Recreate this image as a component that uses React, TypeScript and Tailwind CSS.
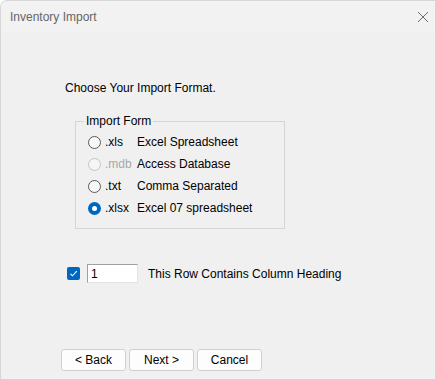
import React from "react";

const radios = [
    { ext: ".xls", label: "Excel Spreadsheet", checked: false, disabled: false },
    { ext: ".mdb", label: "Access Database", checked: false, disabled: true },
    { ext: ".txt", label: "Comma Separated", checked: false, disabled: false },
    { ext: ".xlsx", label: "Excel 07 spreadsheet", checked: true, disabled: false },
];

function Radio(props: { checked: boolean; disabled: boolean }) {
    if (props.checked) {
        return (
            <span className="w-[13px] h-[13px] rounded-full bg-[#0067c0] flex items-center justify-center shrink-0">
                <span className="w-[5px] h-[5px] rounded-full bg-white" />
            </span>
        );
    }
    return (
        <span
            className={
                props.disabled
                    ? "w-[13px] h-[13px] rounded-full border border-[#c4c4c4] bg-[#f5f5f5] shrink-0"
                    : "w-[13px] h-[13px] rounded-full border border-[#5a5a5a] bg-[#f7f7f7] shrink-0"
            }
        />
    );
}

export default function App() {
    return (
        <div
            className="w-[435px] h-[379px] bg-[#f0f0f0] border-l border-t border-[#d6d6d6] rounded-tl-[7px] flex flex-col text-[12px] text-black overflow-hidden"
            style={{ fontFamily: '"Liberation Sans", Arial, sans-serif' }}
        >
            {/* title bar */}
            <div className="h-[32px] flex items-center justify-between pl-[9px] pr-[5px] bg-[#f2f2f2]">
                <span className="text-[12px] text-[#666666]">Inventory Import</span>
                <svg width="12" height="12" viewBox="0 0 12 12" className="mr-[1px]">
                    <path d="M1 1 L11 11 M11 1 L1 11" stroke="#6b6b6b" strokeWidth="1" />
                </svg>
            </div>

            <div className="pl-[64px] flex flex-col flex-1">
                <p className="mt-[47px] leading-[16px]">Choose Your Import Format.</p>

                <fieldset className="mt-[17px] ml-[10px] w-[210px] border border-[#d5d5d5] pb-[9px] pt-[2px]">
                    <legend className="ml-[8px] px-[2px] leading-[16px]">Import Form</legend>
                    {radios.map((r) => (
                        <div key={r.ext} className="h-[22px] flex items-center pl-[12px]">
                            <Radio checked={r.checked} disabled={r.disabled} />
                            <span className={r.disabled ? "ml-[4px] w-[32px] text-[#a8a8a8]" : "ml-[4px] w-[32px]"}>{r.ext}</span>
                            <span>{r.label}</span>
                        </div>
                    ))}
                </fieldset>

                <div className="mt-[35px] flex items-center h-[19px]">
                    <span className="w-[13px] h-[13px] rounded-[2px] bg-[#0067c0] flex items-center justify-center ml-[2px]">
                        <svg width="9" height="9" viewBox="0 0 9 9">
                            <path d="M1.5 4.8 L3.5 6.8 L7.8 2.2" stroke="white" strokeWidth="1.1" fill="none" />
                        </svg>
                    </span>
                    <div className="ml-[7px] w-[51px] h-[19px] bg-white border border-t-[#a0a0a0] border-l-[#a0a0a0] border-r-[#e3e3e3] border-b-[#e3e3e3] flex items-center pl-[3px]">
                        1
                    </div>
                    <span className="ml-[10px]">This Row Contains Column Heading</span>
                </div>

                <div className="mt-[66px] flex gap-[3px] -ml-[4px]">
                    <button className="w-[65px] h-[22px] bg-[#fdfdfd] border border-[#d0d0d0] rounded-[3px] text-[12px]">&lt; Back</button>
                    <button className="w-[65px] h-[22px] bg-[#fdfdfd] border border-[#d0d0d0] rounded-[3px] text-[12px]">Next &gt;</button>
                    <button className="w-[65px] h-[22px] bg-[#fdfdfd] border border-[#d0d0d0] rounded-[3px] text-[12px]">Cancel</button>
                </div>
            </div>
        </div>
    );
}
